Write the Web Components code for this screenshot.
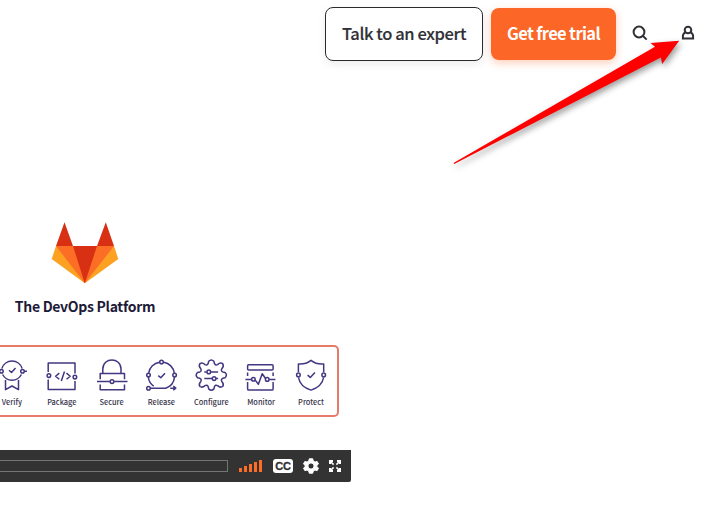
<!DOCTYPE html>
<html lang="en"><head><meta charset="utf-8"><title>The DevOps Platform</title>
<style>html,body{margin:0;background:#fff}body{width:721px;height:523px;overflow:hidden;font-family:"Noto Sans CJK SC","Noto Sans CJK JP",sans-serif}</style></head>
<body><page-view></page-view>
<script>
const define = (name, html) => customElements.define(name, class extends HTMLElement {
  constructor(){ super(); this.attachShadow({mode:"open"}).innerHTML = html; }
});

define("action-button", `<style>
:host{display:flex;box-sizing:border-box;align-items:center;justify-content:center;width:158px;height:54px;padding-bottom:3px;border:1px solid #2b2b2f;border-radius:8px;background:#fff;color:#303036;font-size:16.5px;font-weight:500;line-height:20px;white-space:nowrap;box-shadow:0 3px 8px rgba(0,0,0,.08)}
:host([primary]){width:125px;height:52px;padding-bottom:2px;border:0;background:#fc6626;color:#fff;font-weight:700;box-shadow:0 3px 8px rgba(252,102,38,.32)}
span{letter-spacing:var(--track,0)}
:host(:not([primary])) span{-webkit-text-stroke:.15px #303036}
</style><span><slot></slot></span>`);

define("search-icon", `<style>:host{display:block;width:18px;height:18px}svg{display:block}</style>
<svg width="18" height="18" fill="none" stroke="#303036" stroke-width="2"><circle cx="8" cy="8" r="5.4"/><path d="M12 12L15.7 15.6"/></svg>`);

define("user-icon", `<style>:host{display:block;width:14px;height:16px}svg{display:block}</style>
<svg width="14" height="16" fill="none" stroke="#303036" stroke-width="2"><circle cx="7" cy="5" r="3.3"/><path d="M4.4 7.3C2.6 8.2 1.9 9.4 1.9 11V13.6H12.1V11C12.1 9.4 11.4 8.2 9.6 7.3"/></svg>`);

define("site-header", `<style>
:host{display:flex;box-sizing:border-box;height:68px;padding-left:325px;align-items:center}
action-button[primary]{margin-left:8px}
search-icon{margin:-2px 0 0 15px}user-icon{margin:-3px 0 0 32px}
</style><action-button style="--track:-.4px">Talk to an expert</action-button><action-button primary style="--track:-.65px">Get free trial</action-button><search-icon></search-icon><user-icon></user-icon>`);

define("fox-logo", `<style>:host{display:block;width:68px;height:62px}svg{display:block}</style>
<svg width="68" height="62" viewBox="51 222 68 62">
<path fill="#fca121" d="M56 246L51.7 259L84.8 283.3L118.3 259L114 246Z"/>
<path fill="#fc6d26" d="M56 246H114L84.8 283.3Z"/>
<path fill="#d83013" d="M73 246H97L84.8 283.3ZM64.5 222.2L56 246H73ZM105.8 222.2L97 246H114Z"/></svg>`);

const stageIcons = {
verify:`<path d="M14.9 17.5A10.6 10.6 0 0 1 35.1 17.5M15.6 23.5A10.6 10.6 0 0 0 34.4 23.5M22 19.3L24.5 21.5L28.5 17M18.5 29V38.7L25 35L31.5 38.7V29M37.3 20.3H40"/><circle cx="14.4" cy="20.3" r="1.8"/><circle cx="35.5" cy="20.3" r="1.8"/>`,
package:`<g transform="translate(0 -.6)"><path d="M11.2 21.7V12.6H38V23M11.2 29V39.2H38V30.5M22.3 22.7L18.6 25.8L22.3 28.9M29.5 22.7L33.2 25.8L29.5 28.9M27.5 21L24.3 30.7"/><circle cx="11.9" cy="25.2" r="1.8"/><circle cx="37.9" cy="26.7" r="1.8"/></g>`,
secure:`<path d="M15.8 22.3V18C15.8 6 34 6 34 18V22.3M13.2 28.2V22.5H37.5V28.2M10 30.6H22.7M27.3 30.6H40.5M13.2 33.4V38.7H37.5V33.4"/><circle cx="25" cy="30.6" r="1.9"/>`,
release:`<g transform="translate(-.7 -.8)"><path d="M23.2 12A13 13 0 0 0 12.4 22.7M12 26.8A13 13 0 0 0 17.4 36M27.5 12A13 13 0 0 1 38 22.7M38.2 27A13 13 0 0 1 29.4 38H14.5M34 38H39M37 36L39.5 38L37 40M22 25.4L24.5 27.6L28.7 23"/><circle cx="25.2" cy="11.8" r="1.8"/><circle cx="12.2" cy="24.8" r="1.8"/><circle cx="38.3" cy="24.8" r="1.8"/><circle cx="12.2" cy="38.1" r="1.8"/></g>`,
configure:`<g transform="translate(.3 -.9)"><path d="M22.4 11.2Q25 8.6 27.6 11.2L28.2 13.6Q29.2 15.6 31.3 14.5Q34 12 36.4 13.6Q38 16 35.5 18.7Q34.4 20.8 36.4 21.8L38.8 22.4Q41.4 25 38.8 27.6L36.4 28.2Q34.4 29.2 35.5 31.3Q38 34 36.4 36.4Q34 38 31.3 35.5Q29.2 34.4 28.2 36.4L27.6 38.8Q25 41.4 22.4 38.8L21.8 36.4Q20.8 34.4 18.7 35.5Q16 38 13.6 36.4Q12 34 14.5 31.3Q15.6 29.2 13.6 28.2L11.2 27.6Q8.6 25 11.2 22.4L13.6 21.8Q15.6 20.8 14.5 18.7Q12 16 13.6 13.6Q16 12 18.7 14.5Q20.8 15.6 21.8 13.6Z"/><path d="M18 21.8H20.5M24.5 21.8H31.8M18 28.5H25.8M29.8 28.5H31.8"/><circle cx="22.5" cy="21.8" r="1.8"/><circle cx="27.8" cy="28.5" r="1.8"/></g>`,
monitor:`<g transform="translate(-.6 -.9)"><rect x="12.2" y="14.6" width="25.5" height="5.2" rx="1"/><path d="M12.2 22.5V26M12.2 32V38.8Q12.2 40 13.4 40H36.5Q37.7 40 37.7 38.8V32M37.7 22.5V26M10 29.4H16M19.8 30L23 34.2L26.8 23.6L30 28.2M33.8 29.4H40"/><circle cx="18" cy="29.1" r="1.8"/><circle cx="31.8" cy="29.3" r="1.8"/></g>`,
protect:`<g transform="translate(-.1 -.9)"><path d="M12.5 22V13.8Q19.5 14.5 25.1 10.2Q30.5 14.5 37.8 13.8V22M12.6 27.4Q14 36.5 25.1 40Q36.2 36.5 37.7 27.4M21.7 25L24.4 27.3L29 22.4"/><circle cx="12.5" cy="24.8" r="1.8"/><circle cx="37.8" cy="24.8" r="1.8"/></g>`};
customElements.define("stage-item", class extends HTMLElement {
  constructor(){ super(); this.attachShadow({mode:"open"}); }
  connectedCallback(){ this.shadowRoot.innerHTML = `<style>
:host{display:block;width:49.85px;text-align:center;color:#35334a;font-size:7.4px;line-height:10px;font-weight:500;white-space:nowrap}
svg{display:block;height:46px}</style><svg width="50" height="46" viewBox="0 0 50 46" fill="none" stroke="#443680" stroke-width="1.5" stroke-linejoin="round">${stageIcons[this.getAttribute("kind")]}</svg><slot></slot>`; }
});

define("stage-strip", `<style>
:host{display:flex;box-sizing:border-box;height:72px;width:352px;margin-left:-13px;padding-top:4px;border:solid #e67b69;border-width:2px 2px 2px 0;border-radius:0 5px 5px 0}
</style><slot></slot>`);

define("player-bar", `<style>
:host{display:flex;box-sizing:border-box;align-items:center;width:351px;height:32px;background:#333;border-radius:0 0 2px 0}
.track{box-sizing:border-box;width:228px;height:12px;border:1px solid #757575;border-left:0}
.volume{display:flex;align-items:flex-end;gap:2px;height:12px;margin-left:11px}
.volume i{width:3px;background:#fc6d26}
.cc{margin-left:11px;width:20px;height:14px;border-radius:3px;background:#fff;color:#333;font:700 11px/14px "Liberation Sans",sans-serif;text-align:center;letter-spacing:-.3px;-webkit-text-stroke:.3px #333}
.gear{margin-left:10px}.full{margin-left:10px}svg{display:block}
</style><div class="track"></div><div class="volume"><i style="height:4px"></i><i style="height:6px"></i><i style="height:8px"></i><i style="height:10px"></i><i style="height:12px"></i></div><div class="cc">CC</div>
<svg class="gear" width="16" height="16" fill="#fff" stroke="#fff" stroke-linejoin="round"><path fill-rule="evenodd" d="M6.3 .8H9.7L10.3 3.1L12 4.1L14.1 3.4L15.5 6L13.8 7.5V8.7L15.5 10.1L14.1 12.7L12 12L10.3 13L9.7 15.2H6.3L5.7 13L4 12L1.9 12.7L.5 10.1L2.2 8.7V7.5L.5 6L1.9 3.4L4 4.1L5.7 3.1ZM8 4.9A3.1 3.1 0 1 0 8 11.1A3.1 3.1 0 1 0 8 4.9Z"/></svg>
<svg class="full" width="12" height="12" fill="none" stroke="#fff" stroke-width="2"><path d="M1 4V1H4M8 1H11V4M11 8V11H8M4 11H1V8"/><path stroke-width="1.5" d="M1 1L4.6 4.6M11 1L7.4 4.6M1 11L4.6 7.4M11 11L7.4 7.4"/></svg>`);

define("pointer-arrow", `<style>:host{position:absolute;left:440px;top:30px;pointer-events:none}svg{display:block;overflow:visible;filter:drop-shadow(2px 3px 3px rgba(0,0,0,.4))}</style>
<svg width="260" height="145" viewBox="440 30 260 145"><path fill="#f00" d="M453.5 163L655 46.8L650.5 43.1L679.2 40.8L662.2 64L660.8 57.5L454.2 164Z"/></svg>`);

define("page-view", `<style>
:host{display:block;position:relative;width:721px;height:523px;overflow:hidden}
main{display:flex;flex-direction:column;align-items:flex-start;padding-top:154px}
fox-logo{margin-left:51px}
h1{margin:10px 0 0;width:170px;text-align:center;color:#1d1a38;font-size:14px;font-weight:700;line-height:24px;white-space:nowrap}
h1 span{letter-spacing:-.3px}
stage-strip{margin-top:27px}player-bar{margin-top:33px}
</style><site-header></site-header><main><fox-logo></fox-logo><h1><span>The DevOps Platform</span></h1>
<stage-strip><stage-item kind="verify">Verify</stage-item><stage-item kind="package">Package</stage-item><stage-item kind="secure">Secure</stage-item><stage-item kind="release">Release</stage-item><stage-item kind="configure">Configure</stage-item><stage-item kind="monitor">Monitor</stage-item><stage-item kind="protect">Protect</stage-item></stage-strip>
<player-bar></player-bar></main><pointer-arrow></pointer-arrow>`);
</script></body></html>
